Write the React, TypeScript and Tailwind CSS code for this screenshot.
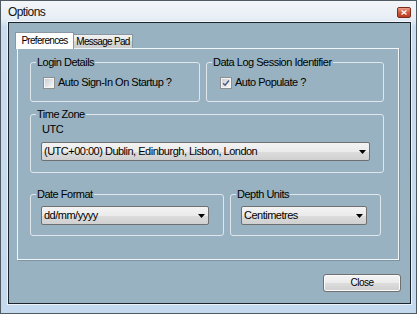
import React from 'react';

const PANEL = 'bg-[#98b2c1]';

function Arrow() {
  return (
    <svg width="7" height="4" viewBox="0 0 7 4" className="shrink-0">
      <path d="M0 0 H7 L3.5 4 Z" fill="#000" />
    </svg>
  );
}

function Dropdown({ value, width }: { value: string; width: string }) {
  return (
    <div
      className={`${width} h-[19px] flex items-center justify-between pl-[2px] pr-[3px] border border-[#707070] rounded-[2px] bg-[linear-gradient(to_bottom,#f3f3f3_0%,#ebebeb_50%,#dddddd_50%,#d0d0d0_100%)] text-[11px] tracking-[-0.5px] leading-[13px] whitespace-nowrap overflow-hidden`}
    >
      <span>{value}</span>
      <Arrow />
    </div>
  );
}

function CheckBox({ checked, label }: { checked?: boolean; label: string }) {
  return (
    <div className="flex items-center gap-[3px]">
      <div className="w-[12px] h-[12px] border border-[#8e8f8f] bg-[#f4f4f4] p-[1px]">
        <div className="w-full h-full bg-[linear-gradient(135deg,#cbcfd5,#f5f6f7)] flex items-center justify-center">
          {checked && (
            <svg width="9" height="8" viewBox="0 0 9 8">
              <path d="M1.2 4.2 L3.5 6.5 L7.8 1.2" fill="none" stroke="#4d5b78" strokeWidth="1.6" />
            </svg>
          )}
        </div>
      </div>
      <span className="text-[11px] tracking-[-0.5px] leading-[13px]">{label}</span>
    </div>
  );
}

function GroupBox({ title, className, children }: { title: string; className: string; children?: React.ReactNode }) {
  return (
    <div className={`relative border border-[#dfe7ec] rounded-[3px] ${className}`}>
      <span className={`absolute -top-[7px] left-[5px] px-[1px] ${PANEL} text-[11px] tracking-[-0.5px] leading-[13px] whitespace-nowrap`}>
        {title}
      </span>
      {children}
    </div>
  );
}

export default function App() {
  return (
    <div className="w-[417px] h-[314px] flex flex-col border border-[#505a63] bg-[linear-gradient(to_bottom,#f3f6f9_0px,#e6edf4_18px,#cadcef_26px,#c4d9ee_100%)] font-['Liberation_Sans',Arial,sans-serif] text-black select-none">
      {/* Title bar */}
      <div className="h-[21px] shrink-0 flex items-center justify-between pl-[7px] pr-[5px]">
        <span className="text-[12px] tracking-[-0.6px] leading-[14px] text-[#111]">Options</span>
        <div className="mt-[2px] w-[14px] h-[11px] rounded-[2px] border border-[#7c2c1c] bg-[linear-gradient(to_bottom,#eaa08c,#cf5a3c_50%,#b83a22)] flex items-center justify-center">
          <svg width="6" height="5" viewBox="0 0 6 5">
            <path d="M0.5 0.5 L5.5 4.5 M5.5 0.5 L0.5 4.5" stroke="#fff" strokeWidth="1.3" />
          </svg>
        </div>
      </div>

      {/* Client area */}
      <div className={`flex-1 ml-[7px] mr-[5px] mb-[9px] border border-[#1c242b] shadow-[0_0_0_1px_#ffffffaa] ${PANEL} flex flex-col pt-[10px] pl-[8px]`}>
        {/* Tabs */}
        <div className="h-[16px] flex items-end relative z-10 -mb-px">
          <div className="-ml-[2px] w-[59px] h-[17px] border border-b-0 border-[#8a97a0] bg-white flex items-start justify-center pt-[2px] text-[10px] tracking-[-0.7px] leading-[12px]">
            Preferences
          </div>
          <div className="w-[59px] h-[14px] mb-px border border-b-0 border-l-0 border-[#8a97a0] bg-[linear-gradient(to_bottom,#f2f2f2,#e4e4e4_50%,#d6d6d6_50%,#cdcdcd)] flex items-center justify-center text-[10px] tracking-[-0.7px] leading-[12px]">
            Message Pad
          </div>
        </div>

        {/* Tab page */}
        <div className={`w-[382px] h-[212px] border border-[#f2f6f8] shadow-[1px_1px_0_#7d93a1] ${PANEL} pt-[13px] pl-[12px] flex flex-col`}>
          <div className="flex gap-[6px]">
            <GroupBox title="Login Details" className="w-[170px] h-[40px] pt-[13px] pl-[12px]">
              <CheckBox label="Auto Sign-In On Startup ?" />
            </GroupBox>
            <GroupBox title="Data Log Session Identifier" className="w-[178px] h-[40px] pt-[13px] pl-[13px]">
              <CheckBox checked label="Auto Populate ?" />
            </GroupBox>
          </div>

          <GroupBox title="Time Zone" className="mt-[12px] w-[354px] h-[59px] pt-[8px] pl-[10px]">
            <div className="ml-[1px] text-[11px] tracking-[-0.5px] leading-[13px]">UTC</div>
            <div className="mt-[6px]">
              <Dropdown value="(UTC+00:00) Dublin, Edinburgh, Lisbon, London" width="w-[329px]" />
            </div>
          </GroupBox>

          <div className="mt-[21px] flex gap-[6px]">
            <GroupBox title="Date Format" className="w-[194px] h-[42px] pt-[11px] pl-[10px]">
              <Dropdown value="dd/mm/yyyy" width="w-[168px]" />
            </GroupBox>
            <GroupBox title="Depth Units" className="w-[151px] h-[42px] pt-[11px] pl-[10px]">
              <Dropdown value="Centimetres" width="w-[126px]" />
            </GroupBox>
          </div>
        </div>

        {/* Footer */}
        <div className="mt-[14px] flex justify-end pr-[9px]">
          <button className="w-[78px] h-[18px] border border-[#707070] rounded-[3px] bg-[linear-gradient(to_bottom,#f4f4f4,#ebebeb_50%,#dddddd_50%,#cfcfcf)] shadow-[inset_0_0_0_1px_#fcfcfc] text-[10px] tracking-[-0.5px] leading-[12px] text-black">
            Close
          </button>
        </div>
      </div>
    </div>
  );
}
